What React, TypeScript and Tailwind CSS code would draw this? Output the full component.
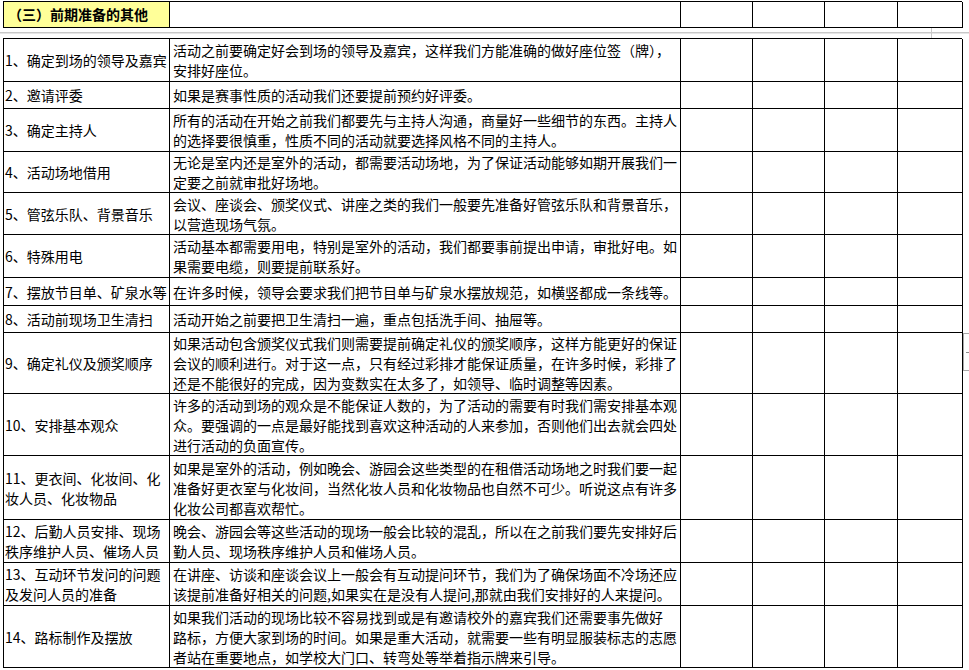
const rows = [
  {
    h: "h-[43px]",
    title: ["1、确定到场的领导及嘉宾"],
    body: ["活动之前要确定好会到场的领导及嘉宾，这样我们方能准确的做好座位签（牌），", "安排好座位。"],
  },
  { h: "h-[27px]", title: ["2、邀请评委"], body: ["如果是赛事性质的活动我们还要提前预约好评委。"] },
  {
    h: "h-[43px]",
    title: ["3、确定主持人"],
    body: ["所有的活动在开始之前我们都要先与主持人沟通，商量好一些细节的东西。主持人", "的选择要很慎重，性质不同的活动就要选择风格不同的主持人。"],
  },
  {
    h: "h-[41px]",
    title: ["4、活动场地借用"],
    body: ["无论是室内还是室外的活动，都需要活动场地，为了保证活动能够如期开展我们一", "定要之前就审批好场地。"],
  },
  {
    h: "h-[42px]",
    title: ["5、管弦乐队、背景音乐"],
    body: ["会议、座谈会、颁奖仪式、讲座之类的我们一般要先准备好管弦乐队和背景音乐，", "以营造现场气氛。"],
  },
  {
    h: "h-[43px]",
    title: ["6、特殊用电"],
    body: ["活动基本都需要用电，特别是室外的活动，我们都要事前提出申请，审批好电。如", "果需要电缆，则要提前联系好。"],
  },
  {
    h: "h-[28px]",
    title: ["7、摆放节目单、矿泉水等"],
    body: ["在许多时候，领导会要求我们把节目单与矿泉水摆放规范，如横竖都成一条线等。"],
  },
  { h: "h-[27px]", title: ["8、活动前现场卫生清扫"], body: ["活动开始之前要把卫生清扫一遍，重点包括洗手间、抽屉等。"] },
  {
    h: "h-[61px]",
    title: ["9、确定礼仪及颁奖顺序"],
    body: [
      "如果活动包含颁奖仪式我们则需要提前确定礼仪的颁奖顺序，这样方能更好的保证",
      "会议的顺利进行。对于这一点，只有经过彩排才能保证质量，在许多时候，彩排了",
      "还是不能很好的完成，因为变数实在太多了，如领导、临时调整等因素。",
    ],
  },
  {
    h: "h-[62px]",
    title: ["10、安排基本观众"],
    body: [
      "许多的活动到场的观众是不能保证人数的，为了活动的需要有时我们需安排基本观",
      "众。要强调的一点是最好能找到喜欢这种活动的人来参加，否则他们出去就会四处",
      "进行活动的负面宣传。",
    ],
  },
  {
    h: "h-[64px]",
    title: ["11、更衣间、化妆间、化", "妆人员、化妆物品"],
    body: [
      "如果是室外的活动，例如晚会、游园会这些类型的在租借活动场地之时我们要一起",
      "准备好更衣室与化妆间，当然化妆人员和化妆物品也自然不可少。听说这点有许多",
      "化妆公司都喜欢帮忙。",
    ],
  },
  {
    h: "h-[43px]",
    title: ["12、后勤人员安排、现场", "秩序维护人员、催场人员"],
    body: ["晚会、游园会等这些活动的现场一般会比较的混乱，所以在之前我们要先安排好后", "勤人员、现场秩序维护人员和催场人员。"],
  },
  {
    h: "h-[43px]",
    title: ["13、互动环节发问的问题", "及发问人员的准备"],
    body: ["在讲座、访谈和座谈会议上一般会有互动提问环节，我们为了确保场面不冷场还应", "该提前准备好相关的问题,如果实在是没有人提问,那就由我们安排好的人来提问。"],
  },
  {
    h: "h-[62px]",
    title: ["14、路标制作及摆放"],
    body: [
      "如果我们活动的现场比较不容易找到或是有邀请校外的嘉宾我们还需要事先做好",
      "路标，方便大家到场的时间。如果是重大活动，就需要一些有明显服装标志的志愿",
      "者站在重要地点，如学校大门口、转弯处等举着指示牌来引导。",
    ],
  },
]

const cols = "grid grid-cols-[166px_511px_72px_72px_73px_65px]"
const cell = "border-r border-b border-black"

function Lines({ lines }: { lines: string[] }) {
  return (
    <div className="leading-[20px]">
      {lines.map((line, i) => (
        <div key={i} className="whitespace-nowrap">
          {line}
        </div>
      ))}
    </div>
  )
}

export default function App() {
  return (
    <div
      className="relative w-[969px] h-[670px] overflow-hidden bg-white pt-[1px] text-[14px] text-black"
      style={{ fontFamily: '"Noto Sans CJK SC", "Noto Sans", sans-serif' }}
    >
      {/* section header */}
      <div className={`${cols} ml-[3px] w-[959px] border-l border-t border-black`}>
        <div className={`${cell} h-[26px] bg-[#ffff99] flex items-center pl-[4px] font-bold whitespace-nowrap`}>
          （三）前期准备的其他
        </div>
        <div className={`${cell} h-[26px]`} />
        <div className={`${cell} h-[26px]`} />
        <div className={`${cell} h-[26px]`} />
        <div className={`${cell} h-[26px]`} />
        <div className={`${cell} h-[26px]`} />
      </div>

      {/* hidden-rows separator */}
      <div className="flex h-[10px]">
        <div className="w-[931px] flex flex-col justify-center">
          <div className="h-[2px] border-t border-[#c8c8c8] bg-[#e6e6e6]" />
        </div>
        <div className="w-px bg-[#c8c8c8]" />
        <div className="flex-1 flex flex-col justify-center">
          <div className="h-[2px] border-t border-[#c8c8c8] bg-[#e6e6e6]" />
        </div>
      </div>

      {/* checklist */}
      <div className="ml-[3px] w-[959px] border-l border-t border-black">
        {rows.map((row, i) => (
          <div key={i} className={`${cols} ${row.h}`}>
            <div className={`${cell} flex items-center pl-[1px] overflow-hidden`}>
              <Lines lines={row.title} />
            </div>
            <div className={`${cell} flex items-center pl-[3px] overflow-hidden`}>
              <Lines lines={row.body} />
            </div>
            <div className={cell} />
            <div className={cell} />
            <div className={cell} />
            <div className={cell} />
          </div>
        ))}
      </div>

      {/* side tab at the right edge */}
      <div className="absolute left-[963px] top-[333px] w-[6px] h-[38px] border-l border-t border-b border-[#a8a8a8] flex flex-col justify-center items-end">
        <div className="w-[3px] h-px bg-[#8c8c8c]" />
      </div>
    </div>
  )
}
